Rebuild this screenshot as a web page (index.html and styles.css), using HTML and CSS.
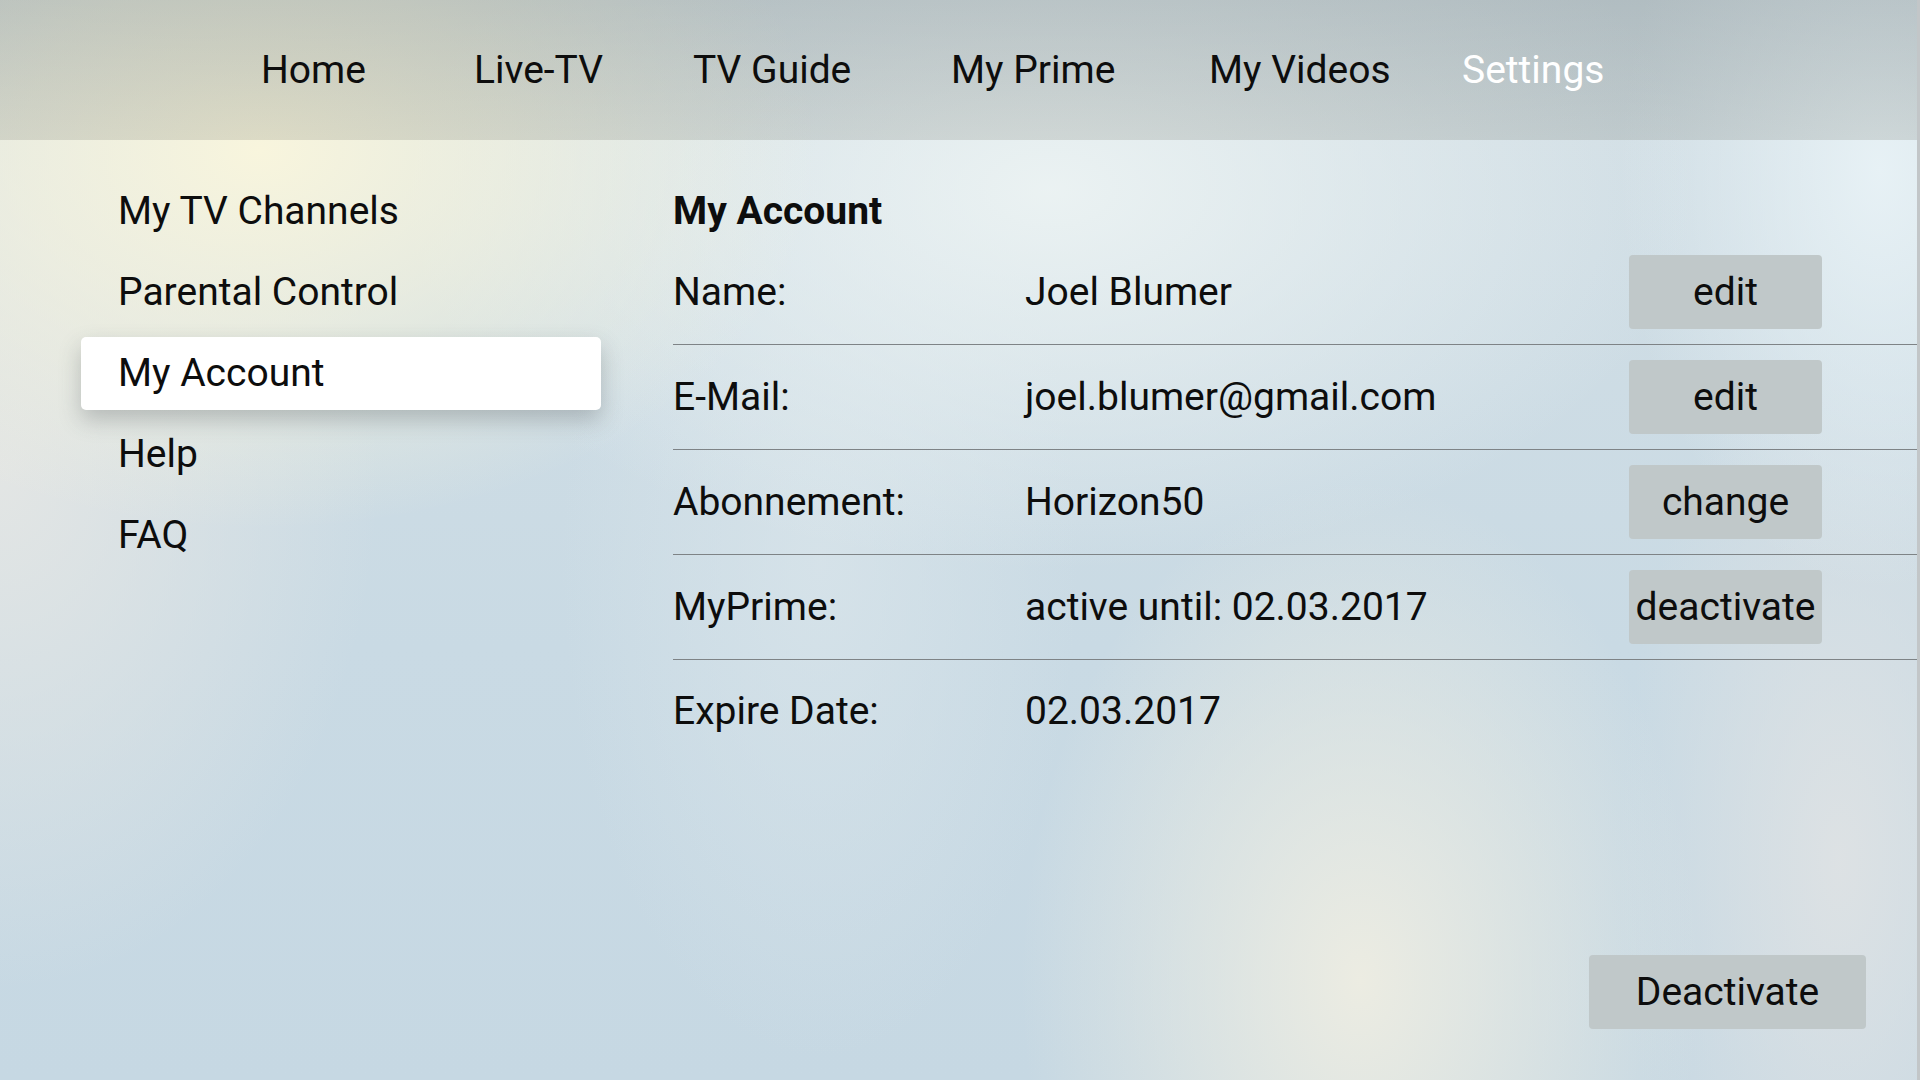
FILE: index.html
```html
<!DOCTYPE html>
<html lang="en">
<head>
<meta charset="utf-8">
<title>Settings - My Account</title>
<link rel="stylesheet" href="styles.css">
</head>
<body>
<div class="page">
  <header class="topbar">
    <nav class="nav">
      <span class="nav-item w-home">Home</span>
      <span class="nav-item w-live">Live-TV</span>
      <span class="nav-item w-guide">TV Guide</span>
      <span class="nav-item w-prime">My Prime</span>
      <span class="nav-item w-videos">My Videos</span>
      <span class="nav-item nav-active">Settings</span>
    </nav>
  </header>
  <main class="main">
    <aside class="sidebar">
      <div class="side-item">My TV Channels</div>
      <div class="side-item">Parental Control</div>
      <div class="side-item side-selected">My Account</div>
      <div class="side-item">Help</div>
      <div class="side-item">FAQ</div>
    </aside>
    <section class="content">
      <h1 class="title">My Account</h1>
      <div class="row">
        <span class="label">Name:</span>
        <span class="value">Joel Blumer</span>
        <span class="btn">edit</span>
      </div>
      <div class="row">
        <span class="label">E-Mail:</span>
        <span class="value">joel.blumer@gmail.com</span>
        <span class="btn">edit</span>
      </div>
      <div class="row">
        <span class="label">Abonnement:</span>
        <span class="value">Horizon50</span>
        <span class="btn">change</span>
      </div>
      <div class="row">
        <span class="label">MyPrime:</span>
        <span class="value">active until: 02.03.2017</span>
        <span class="btn">deactivate</span>
      </div>
      <div class="row row-last">
        <span class="label">Expire Date:</span>
        <span class="value">02.03.2017</span>
      </div>
      <div class="bottom">
        <span class="btn btn-big">Deactivate</span>
      </div>
    </section>
  </main>
</div>
</body>
</html>
```

FILE: styles.css
```css
* { box-sizing: border-box; }

html, body {
  margin: 0;
  padding: 0;
  width: 1920px;
  height: 1080px;
  overflow: hidden;
}

body {
  font-family: Roboto, "Noto Sans", "Liberation Sans", sans-serif;
  color: #0d0d0d;
  background:
    radial-gradient(ellipse 560px 380px at 260px 150px, rgba(248,245,221,1) 0%, rgba(248,245,221,0.6) 45%, rgba(248,245,221,0) 100%),
    radial-gradient(ellipse 650px 380px at 1050px 190px, rgba(236,243,243,0.95) 0%, rgba(236,243,243,0) 100%),
    radial-gradient(ellipse 260px 420px at 1880px 170px, rgba(232,242,246,0.95) 0%, rgba(232,242,246,0) 100%),
    radial-gradient(ellipse 340px 500px at 1360px 980px, rgba(236,236,226,1) 0%, rgba(236,236,226,0) 100%),
    radial-gradient(ellipse 220px 520px at 1840px 860px, rgba(222,226,228,0.95) 0%, rgba(222,226,228,0) 100%),
    radial-gradient(ellipse 380px 520px at 0px 470px, rgba(228,230,228,0.95) 0%, rgba(228,230,228,0) 100%),
    radial-gradient(ellipse 260px 500px at 820px 560px, rgba(216,228,234,0.8) 0%, rgba(216,228,234,0) 100%),
    linear-gradient(180deg, #d3dfe5 0%, #c9dae4 60%, #c6d8e3 100%);
}

.page {
  width: 1920px;
  height: 1080px;
  display: grid;
  grid-template-rows: 140px 1fr;
  border-right: 3px solid #c2c6c8;
}

/* Top navigation */
.topbar {
  background: linear-gradient(180deg, rgba(80,92,92,0.26) 0%, rgba(96,100,88,0.18) 100%);
  display: flex;
  align-items: center;
}

.nav {
  display: flex;
  align-items: center;
  padding-left: 261px;
  font-size: 39px;
  line-height: 48px;
  color: #0d0d0d;
}

.nav-item { display: block; white-space: nowrap; }
.w-home { width: 213px; }
.w-live { width: 219px; }
.w-guide { width: 258px; }
.w-prime { width: 258px; }
.w-videos { width: 253px; }
.nav-active { color: #ffffff; }

/* Main */
.main {
  display: grid;
  grid-template-columns: 601px 1fr;
  min-height: 0;
}

.sidebar {
  padding: 35px 0 0 81px;
  display: flex;
  flex-direction: column;
  gap: 8px;
}

.side-item {
  height: 73px;
  line-height: 73px;
  padding-left: 37px;
  font-size: 39px;
  border-radius: 5px;
  white-space: nowrap;
}

.side-selected {
  background: #ffffff;
  box-shadow: 0 10px 22px rgba(60,70,75,0.28);
}

.content {
  padding-left: 72px;
  padding-top: 42px;
  display: flex;
  flex-direction: column;
  min-height: 0;
}

.title {
  margin: 0;
  font-size: 39px;
  font-weight: 700;
  line-height: 58px;
  height: 58px;
}

.row {
  display: grid;
  grid-template-columns: 352px 1fr 193px;
  align-items: center;
  padding: 15px 95px 15px 0;
  border-bottom: 1px solid #7e8386;
  font-size: 39px;
  min-height: 105px;
}

.row-last { border-bottom: none; padding-top: 12px; }

.label, .value { white-space: nowrap; line-height: 74px; }

.btn {
  display: flex;
  align-items: center;
  justify-content: center;
  height: 74px;
  background: #c0c8c9;
  border-radius: 4px;
  font-size: 39px;
  white-space: nowrap;
  color: #0d0d0d;
}

.bottom {
  margin-top: auto;
  display: flex;
  justify-content: flex-end;
  padding: 0 51px 51px 0;
}

.btn-big {
  width: 277px;
}
```
